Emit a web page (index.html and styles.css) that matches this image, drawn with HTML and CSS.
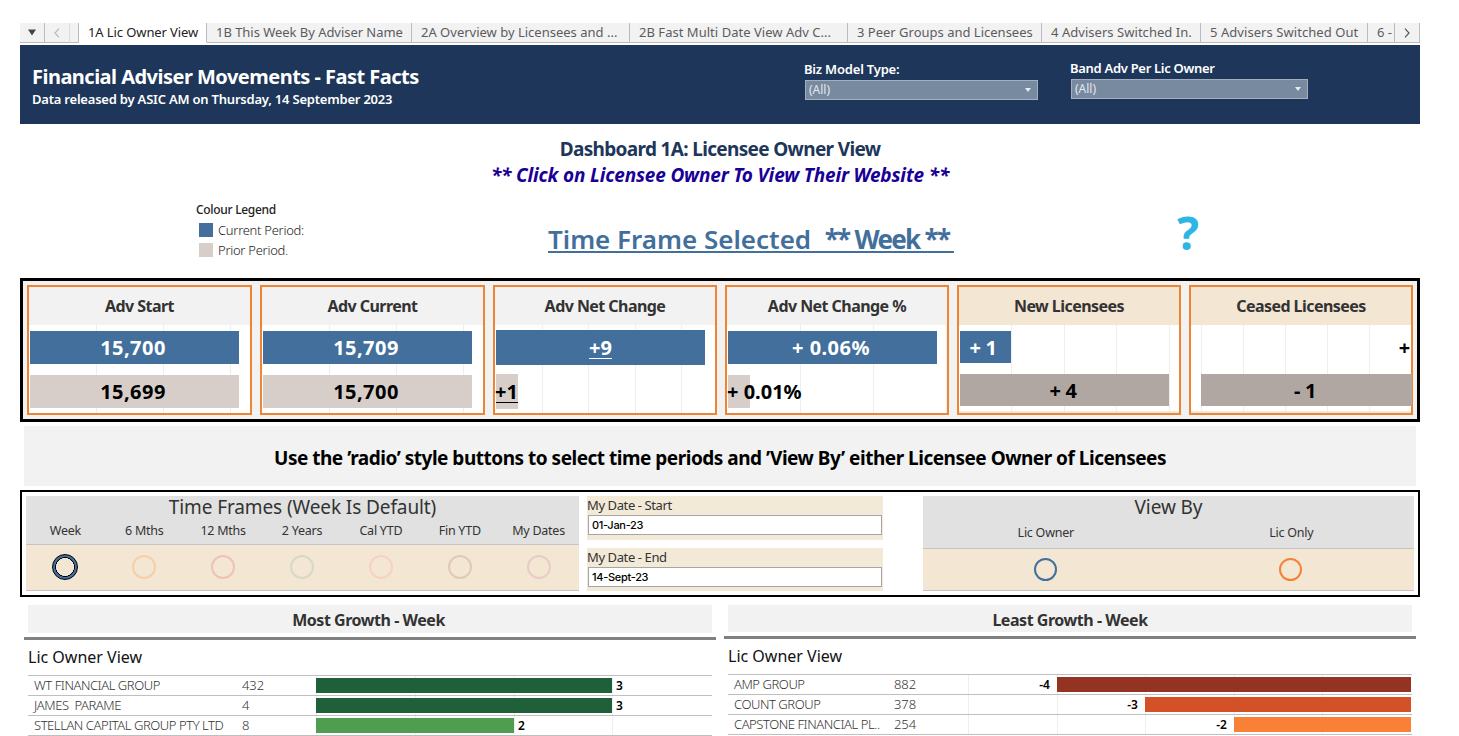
FILE: index.html
```
<!DOCTYPE html>
<html lang="en">
<head>
  <meta charset="UTF-8" />
  <meta name="viewport" content="width=device-width, initial-scale=1.0"/>
  <title>Financial Adviser Movements - Fast Facts</title>
  <link rel="stylesheet" href="styles.css">
</head>
<body>
  <div class="dashboard">

    <!-- Sheet tabs -->
    <nav class="tabs">
      <div class="tab-btn menu"><svg width="8" height="7" viewBox="0 0 8 7"><path d="M0 0.5h8L4 6.5z" fill="#444"/></svg></div>
      <div class="tab-btn prev"><svg width="6" height="10" viewBox="0 0 6 10"><path d="M5 0.7L1 5l4 4.3" fill="none" stroke="#b8b8b8" stroke-width="1.2"/></svg></div>
      <div class="tab-btn spacer"></div>
      <div class="tab t1 active">1A Lic Owner View</div>
      <div class="tab t2">1B This Week By Adviser Name</div>
      <div class="tab t3">2A Overview by Licensees and ...</div>
      <div class="tab t4">2B Fast Multi Date View Adv C...</div>
      <div class="tab t5">3 Peer Groups and Licensees</div>
      <div class="tab t6">4 Advisers Switched In.</div>
      <div class="tab t7">5 Advisers Switched Out</div>
      <div class="tab t8">6 -</div>
      <div class="tab-btn next"><svg width="6" height="10" viewBox="0 0 6 10"><path d="M1 0.7L5 5L1 9.3" fill="none" stroke="#555" stroke-width="1.2"/></svg></div>
    </nav>

    <!-- Header -->
    <header class="header">
      <div class="header-title">
        <h1>Financial Adviser Movements - Fast Facts</h1>
        <p>Data released by ASIC AM on Thursday, 14 September 2023</p>
      </div>
      <div class="filter biz">
        <label>Biz Model Type:</label>
        <div class="select"><span>(All)</span><svg width="6" height="4" viewBox="0 0 6 4"><path d="M0 0h6L3 4z" fill="#e8ebef"/></svg></div>
      </div>
      <div class="filter band">
        <label>Band Adv Per Lic Owner</label>
        <div class="select"><span>(All)</span><svg width="6" height="4" viewBox="0 0 6 4"><path d="M0 0h6L3 4z" fill="#e8ebef"/></svg></div>
      </div>
    </header>

    <!-- Titles and legend -->
    <section class="intro">
      <h2>Dashboard 1A: Licensee Owner View</h2>
      <p class="click-note">** Click on Licensee Owner To View Their Website **</p>
      <div class="intro-row">
        <div class="legend">
          <div class="legend-title">Colour Legend</div>
          <div class="legend-item"><i class="swatch current"></i>Current Period:</div>
          <div class="legend-item"><i class="swatch prior"></i>Prior Period.</div>
        </div>
        <div class="time-frame">Time Frame Selected&nbsp; <b>** Week **</b></div>
        <div class="help">?</div>
      </div>
    </section>

    <!-- KPI cards -->
    <section class="kpis">
      <div class="card">
        <h3>Adv Start</h3>
        <div class="plot grid-a">
          <div class="bar current full">15,700</div>
          <div class="bar prior full">15,699</div>
        </div>
      </div>
      <div class="card">
        <h3>Adv Current</h3>
        <div class="plot grid-a">
          <div class="bar current full">15,709</div>
          <div class="bar prior full">15,700</div>
        </div>
      </div>
      <div class="card">
        <h3>Adv Net Change</h3>
        <div class="plot grid-b tall">
          <div class="bar current full"><u>+9</u></div>
          <div class="bar prior short"><u>+1</u></div>
        </div>
      </div>
      <div class="card">
        <h3>Adv Net Change %</h3>
        <div class="plot grid-c">
          <div class="bar current full">+ 0.06%</div>
          <div class="bar prior short">+ 0.01%</div>
        </div>
      </div>
      <div class="card sand">
        <h3>New Licensees</h3>
        <div class="plot grid-d low">
          <div class="bar current quarter">+ 1</div>
          <div class="bar taupe full">+ 4</div>
        </div>
      </div>
      <div class="card sand">
        <h3>Ceased Licensees</h3>
        <div class="plot grid-e low right">
          <div class="bar none">+</div>
          <div class="bar taupe full">- 1</div>
        </div>
      </div>
    </section>

    <div class="banner">Use the ’radio’ style buttons to select time periods and ’View By’ either Licensee Owner of Licensees</div>

    <!-- Controls -->
    <section class="controls">
      <div class="radio-panel frames">
        <div class="panel-head">
          <h4>Time Frames (Week Is Default)</h4>
          <div class="labels">
            <span>Week</span><span>6 Mths</span><span>12 Mths</span><span>2 Years</span><span>Cal YTD</span><span>Fin YTD</span><span>My Dates</span>
          </div>
        </div>
        <div class="radios">
          <span><i class="radio selected"></i></span>
          <span><i class="radio orange-light"></i></span>
          <span><i class="radio red-light"></i></span>
          <span><i class="radio green-light"></i></span>
          <span><i class="radio pink-light"></i></span>
          <span><i class="radio brown-light"></i></span>
          <span><i class="radio mauve-light"></i></span>
        </div>
      </div>
      <div class="dates">
        <div class="date-field">
          <label for="dateStart">My Date - Start</label>
          <input type="text" id="dateStart" value="01-Jan-23" />
        </div>
        <div class="date-field">
          <label for="dateEnd">My Date - End</label>
          <input type="text" id="dateEnd" value="14-Sept-23" />
        </div>
      </div>
      <div class="radio-panel view-by">
        <div class="panel-head">
          <h4>View By</h4>
          <div class="labels"><span>Lic Owner</span><span>Lic Only</span></div>
        </div>
        <div class="radios">
          <span><i class="radio blue"></i></span>
          <span><i class="radio orange"></i></span>
        </div>
      </div>
    </section>

    <!-- Growth tables -->
    <section class="growth">
      <div class="growth-panel most">
        <h3>Most Growth - Week</h3>
        <div class="view-title">Lic Owner View</div>
        <div class="rows">
          <div class="row"><span class="name">WT FINANCIAL GROUP</span><span class="count">432</span><div class="track"><div class="growth-bar green-dark w3"></div><b>3</b></div></div>
          <div class="row"><span class="name">JAMES&nbsp; PARAME</span><span class="count">4</span><div class="track"><div class="growth-bar green-dark w3"></div><b>3</b></div></div>
          <div class="row"><span class="name">STELLAN CAPITAL GROUP PTY LTD</span><span class="count">8</span><div class="track"><div class="growth-bar green w2"></div><b>2</b></div></div>
        </div>
      </div>
      <div class="growth-panel least">
        <h3>Least Growth - Week</h3>
        <div class="view-title">Lic Owner View</div>
        <div class="rows">
          <div class="row"><span class="name">AMP GROUP</span><span class="count">882</span><div class="track"><b>-4</b><div class="growth-bar rust n4"></div></div></div>
          <div class="row"><span class="name">COUNT GROUP</span><span class="count">378</span><div class="track"><b>-3</b><div class="growth-bar burnt n3"></div></div></div>
          <div class="row"><span class="name">CAPSTONE FINANCIAL PL..</span><span class="count">254</span><div class="track"><b>-2</b><div class="growth-bar amber n2"></div></div></div>
        </div>
      </div>
    </section>

  </div>
</body>
</html>
```
FILE: styles.css
```
* {
  box-sizing: border-box;
  margin: 0;
  padding: 0;
}

body {
  font-family: "Noto Sans", "Open Sans", sans-serif;
  background: #fff;
  color: #333;
  height: 736px;
  overflow: hidden;
}

.dashboard {
  width: 1400px;
  margin-left: 20px;
  padding-top: 23px;
}

/* Tabs */
.tabs {
  display: flex;
  height: 20px;
  margin-bottom: 2px;
}

.tab, .tab-btn {
  background: #f2f2f2;
  border-right: 1px solid #bbb;
  border-bottom: 1px solid #bbb;
  flex: none;
}

.tab {
  font-size: 13px;
  line-height: 18px;
  padding-left: 9px;
  color: #5c5c5c;
  white-space: nowrap;
  overflow: hidden;
}

.tab.active {
  background: #fff;
  color: #222;
  border-bottom-color: #fff;
}

.tab-btn {
  display: flex;
  align-items: center;
  justify-content: center;
}

.menu { width: 25px; }
.prev { width: 25px; border-right-color: #ddd; }
.spacer { width: 9px; }
.next { width: 25px; }
.t1 { width: 128px; letter-spacing: -0.1px; }
.t2 { width: 205px; letter-spacing: -0.04px; }
.t3 { width: 218px; }
.t4 { width: 218px; letter-spacing: 0.03px; }
.t5 { width: 194px; }
.t6 { width: 159px; letter-spacing: 0.04px; }
.t7 { width: 167px; letter-spacing: 0.06px; }
.t8 { width: 27px; }

/* Header */
.header {
  display: flex;
  height: 79px;
  background: #1d3659;
  color: #fff;
}

.header-title {
  width: 785px;
  padding: 19px 0 0 12px;
}

.header h1 {
  font-size: 20px;
  line-height: 25px;
  letter-spacing: -0.52px;
}

.header p {
  font-size: 13px;
  font-weight: 600;
  line-height: 20px;
  letter-spacing: -0.21px;
}

.filter label {
  display: block;
  font-size: 13px;
  font-weight: 600;
  line-height: 18px;
  letter-spacing: -0.3px;
  margin-bottom: 2px;
  margin-left: -1px;
}

.biz {
  width: 233px;
  margin-right: 33px;
  padding-top: 15px;
}

.biz label { letter-spacing: -0.2px; }

.band {
  width: 237px;
  padding-top: 14px;
}

.select {
  display: flex;
  justify-content: space-between;
  align-items: center;
  height: 20px;
  padding: 0 6px 1px 3px;
  border: 1px solid #a5afbd;
  background: #788aa0;
  color: #e4e7ec;
  font-size: 12px;
  font-weight: 400;
  letter-spacing: 0;
}

/* Intro */
.intro {
  height: 154px;
  padding-top: 12px;
  text-align: center;
}

.intro h2 {
  font-size: 19px;
  font-weight: 700;
  line-height: 27px;
  letter-spacing: -0.66px;
  color: #1d3659;
}

.click-note {
  font-size: 19px;
  font-weight: 700;
  font-style: italic;
  line-height: 25px;
  letter-spacing: -0.17px;
  color: #1a0096;
}

.intro-row {
  display: flex;
  margin-top: 12px;
}

.legend {
  width: 528px;
  padding-left: 176px;
  text-align: left;
  color: #222;
  font-size: 13px;
  font-weight: 300;
  letter-spacing: -0.28px;
}

.legend-title {
  font-size: 12px;
  font-weight: 500;
  line-height: 20px;
  letter-spacing: -0.3px;
}

.legend-item {
  display: flex;
  align-items: center;
  height: 20px;
  padding: 0 0 1px 3px;
}

.swatch {
  width: 14px;
  height: 14px;
  margin: 1px 5px 0 0;
}

.current { background: #426f9c; }
.prior { background: #d7cec9; }
.taupe { background: #b1a7a2; }

.time-frame {
  width: 406px;
  margin-top: 25px;
  height: 28px;
  border-bottom: 2px solid #426f9c;
  color: #426f9c;
  font-size: 26px;
  font-weight: 600;
  line-height: 28px;
  text-align: left;
  white-space: nowrap;
}

.time-frame b {
  font-weight: 700;
  letter-spacing: -1.7px;
}

.help {
  margin-left: 223px;
  padding-top: 6px;
  color: #2cb6e4;
  font-size: 46px;
  font-weight: 700;
  line-height: 52px;
}

/* KPI cards */
.kpis {
  display: grid;
  grid-template-columns: 225px 225px 224px 224px 224px 224px;
  column-gap: 8px;
  height: 144px;
  padding: 4px;
  border: 3px solid #000;
  background: #f2f2f2;
}

.card {
  height: 130px;
  border: 2px solid #ef8433;
}

.card h3 {
  height: 38px;
  font-size: 16px;
  font-weight: 700;
  line-height: 38px;
  letter-spacing: -0.55px;
  text-align: center;
}

.sand h3 {
  background: #f3e6d3;
}

.plot {
  display: flex;
  flex-direction: column;
  gap: 11px;
  height: 88px;
  padding: 6px 0 0 1px;
  background-color: #fff;
}

.plot.tall {
  gap: 9px;
  padding-top: 5px;
}

.tall .bar { height: 35px; }
.low { border-bottom: 2px solid #ece8e0; }

.bar {
  height: 33px;
  display: flex;
  align-items: center;
  justify-content: center;
  color: #000;
  font-size: 20px;
  font-weight: 700;
  letter-spacing: 0.45px;
  white-space: nowrap;
}

.bar.current { color: #fff; }
.full { width: 209px; padding-right: 3px; }
.short { width: 22px; justify-content: flex-start; letter-spacing: 0; }
.short { text-indent: -1px; }
.quarter { width: 51px; padding-right: 5px; }
.right .full { width: 211px; margin-left: 9px; }
.right .none { justify-content: flex-end; padding-right: 1px; }
.tall .full { padding-right: 0; letter-spacing: 0; }

.bar u {
  text-decoration: none;
  border-bottom: 1px solid;
  line-height: 20px;
  padding-top: 1px;
}

.low .bar { height: 32px; letter-spacing: -0.3px; }

/* Chart grid lines */
.plot, .track {
  background-image: linear-gradient(#eee, #eee), linear-gradient(#eee, #eee), linear-gradient(#eee, #eee), linear-gradient(#eee, #eee), linear-gradient(#eee, #eee);
  background-size: 1px 100%;
  background-repeat: no-repeat;
}

.grid-a { background-position: 67px 0, 134px 0, 201px 0; }
.grid-b { background-position: 47px 0, 93px 0, 140px 0, 186px 0, 186px 0; }
.grid-c { background-position: 73px 0, 146px 0, 219px 0; }
.grid-d { background-position: 52px 0, 105px 0, 157px 0, 210px 0, 210px 0; }
.grid-e { background-position: 10px 0, 52px 0, 94px 0, 136px 0, 178px 0; }

/* Instruction banner */
.banner {
  height: 60px;
  margin: 4px 4px;
  background: #f2f2f2;
  color: #000;
  font-size: 19px;
  font-weight: 700;
  line-height: 64px;
  letter-spacing: -0.49px;
  text-align: center;
}

/* Controls */
.controls {
  display: flex;
  height: 107px;
  padding: 4px;
  border: 2px solid #000;
}

.radio-panel {
  height: 95px;
  background: #f3e6d3;
  border-bottom: 1px solid #c4c4c4;
}

.frames { width: 553px; }
.view-by { width: 491px; }

.panel-head {
  height: 49px;
  background: #e1e1e1;
  border-bottom: 1px solid #c4c4c4;
}

.view-by .panel-head { height: 53px; }

.panel-head h4 {
  font-size: 19px;
  font-weight: 400;
  line-height: 23px;
  letter-spacing: -0.1px;
  text-align: center;
}

.labels, .radios {
  display: flex;
}

.frames .labels, .frames .radios {
  width: 552px;
}

.labels span, .radios span {
  flex: 1;
  display: flex;
  justify-content: center;
  align-items: center;
}

.labels {
  height: 23px;
  font-size: 12.5px;
  letter-spacing: -0.25px;
}

.view-by .labels {
  height: 27px;
}

.radios {
  height: 44px;
}

.view-by .radios {
  width: 490px;
  height: 40px;
}

.radio {
  width: 24px;
  height: 24px;
  border: 2px solid;
  border-radius: 50%;
}

.selected {
  width: 26px;
  height: 26px;
  border: 1px solid #000;
  background: radial-gradient(circle, transparent 8.8px, #000 9.2px, #000 9.6px, #426f9c 10px);
}

.orange-light { border-color: #f6cfa6; }
.red-light { border-color: #efc2b5; }
.green-light { border-color: #d5d9c7; }
.pink-light { border-color: #f5d2c5; }
.brown-light { border-color: #dfcab8; }
.mauve-light { border-color: #e6cdc5; }
.blue { width: 23px; height: 23px; border-color: #426f9c; }
.orange { width: 23px; height: 23px; border-color: #f58236; }

.dates {
  width: 296px;
  margin: 0 40px 0 8px;
}

.date-field {
  height: 44px;
  padding: 0 1px;
  background: #f2e9d6;
}

.date-field + .date-field {
  height: 43px;
  margin-top: 8px;
}

.date-field label {
  display: block;
  margin-left: -1px;
  font-size: 13px;
  line-height: 19px;
  letter-spacing: -0.4px;
}

.date-field input {
  display: block;
  width: 294px;
  height: 20px;
  padding: 0 3px;
  border: 1px solid #a6a6a6;
  background: #fff;
  color: #000;
  font-family: "Inter", sans-serif;
  font-size: 11px;
  font-weight: 500;
  letter-spacing: -0.3px;
}

/* Growth tables */
.growth {
  display: flex;
  gap: 8px;
  padding: 8px 4px 0;
}

.growth-panel {
  width: 692px;
}

.growth-panel h3 {
  height: 28px;
  margin: 0 4px;
  padding-right: 3px;
  background: #f2f2f2;
  font-size: 16px;
  font-weight: 700;
  line-height: 31px;
  letter-spacing: -0.46px;
  text-align: center;
}

.least h3 { height: 27px; padding-right: 0; }

.view-title {
  margin-top: 4px;
  padding: 0 4px;
  height: 38px;
  border-top: 3px solid #808080;
  color: #111;
  font-size: 16px;
  line-height: 34px;
}

.rows {
  margin: 0 4px;
  border-top: 1px solid #bfbfbf;
}

.row {
  display: flex;
  height: 20px;
  padding-left: 6px;
  border-bottom: 1px solid #bfbfbf;
  color: #333;
  font-size: 13px;
  font-weight: 300;
  line-height: 19px;
  letter-spacing: -0.44px;
}

.name { width: 208px; white-space: nowrap; }
.count { width: 74px; letter-spacing: -0.1px; }
.least .name { width: 160px; }

.track {
  flex: 1;
  display: flex;
  align-items: center;
  gap: 4px;
  background-position: 0 0, 99px 0, 198px 0, 296px 0, 296px 0;
}

.least .track {
  justify-content: flex-end;
  gap: 7px;
  padding-right: 1px;
  background-position: 0 0, 89px 0, 177px 0, 266px 0, 354px 0;
}

.track b {
  color: #000;
  font-size: 12px;
  font-weight: 600;
  letter-spacing: 0;
}

.growth-bar { height: 15px; }
.w3 { width: 296px; }
.w2 { width: 198px; }
.n4 { width: 354px; }
.n3 { width: 266px; }
.n2 { width: 177px; }
.green-dark { background: #1f603a; }
.green { background: #4f9e50; }
.rust { background: #953322; }
.burnt { background: #d45027; }
.amber { background: #f88137; }
```
